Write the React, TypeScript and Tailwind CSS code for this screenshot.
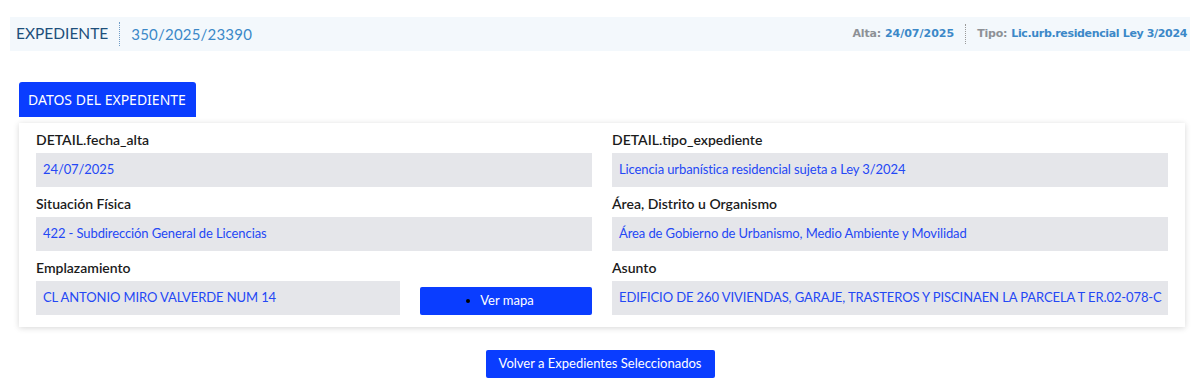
import React from "react";

const lato = {fontFamily: "Lato, 'Open Sans', sans-serif"};

const Field = ({label, value}: {label: string; value: string}) => (
    <div className="flex flex-col">
        <div className="text-[14px] leading-[20px] font-semibold text-[#1b1b1b] mb-[3px]">{label}</div>
        <div className="h-[34px] bg-[#e5e6ea] px-[7px] flex items-center text-[13px] tracking-[-0.1px] text-[#2448f5] whitespace-nowrap overflow-hidden">
            {value}
        </div>
    </div>
);

export default function App() {
    return (
        <div className="w-[1200px] h-[383px] bg-white pt-[17px]" style={lato}>
            <div className="mx-[10px] h-[34px] bg-[#f3f8fc] flex items-center justify-between pl-[6px] pr-[3px]">
                <div className="flex items-center">
                    <span className="text-[15.5px] text-[#1d4f7b]">EXPEDIENTE</span>
                    <span className="mx-[11px] h-[24px] border-l border-dotted border-[#6f9cc6]"/>
                    <span className="text-[15px] text-[#3b88c8] tracking-[0.2px]">350/2025/23390</span>
                </div>
                <div className="flex items-center text-[11px] font-bold" style={{fontFamily: "'DejaVu Sans', Verdana, sans-serif"}}>
                    <span className="text-[#8d9196] tracking-[-0.2px]">Alta:</span>
                    <span className="ml-[4px] text-[#3b88c8]">24/07/2025</span>
                    <span className="mx-[11px] h-[20px] border-l border-dotted border-[#9a9a9a]"/>
                    <span className="text-[#8d9196] tracking-[-0.2px]">Tipo:</span>
                    <span className="ml-[4px] text-[#3b88c8] tracking-[-0.35px]">Lic.urb.residencial Ley 3/2024</span>
                </div>
            </div>

            <div className="mx-[19px] mt-[31px]">
                <div
                    className="w-[177px] h-[35px] bg-[#0a3dff] rounded-t-[3px] flex items-center pl-[9px] text-white text-[14px]"
                    style={{fontFamily: "'Noto Sans', 'Open Sans', sans-serif"}}
                >
                    DATOS DEL EXPEDIENTE
                </div>
                <div className="mt-[6px] w-[1166px] bg-white shadow-[0_1px_6px_rgba(0,0,0,0.16)] px-[17px] pt-[7px] pb-[12px]">
                    <div className="grid grid-cols-2 gap-x-[20px] gap-y-[7px]">
                        <Field label="DETAIL.fecha_alta" value="24/07/2025"/>
                        <Field label="DETAIL.tipo_expediente" value="Licencia urbanística residencial sujeta a Ley 3/2024"/>
                        <Field label="Situación Física" value="422 - Subdirección General de Licencias"/>
                        <Field label="Área, Distrito u Organismo" value="Área de Gobierno de Urbanismo, Medio Ambiente y Movilidad"/>
                        <div className="flex items-end gap-[20px]">
                            <div className="w-[364px]">
                                <Field label="Emplazamiento" value="CL ANTONIO MIRO VALVERDE NUM 14"/>
                            </div>
                            <button className="relative w-[172px] h-[28px] bg-[#0a3dff] rounded-[2px] text-white text-[13px] flex items-center justify-center">
                                <span className="absolute left-[46px] top-[12px] w-[4px] h-[4px] rounded-full bg-black"/>
                                <span className="ml-[2px]">Ver mapa</span>
                            </button>
                        </div>
                        <Field label="Asunto" value="EDIFICIO DE 260 VIVIENDAS, GARAJE, TRASTEROS Y PISCINAEN LA PARCELA T ER.02-078-C"/>
                    </div>
                </div>
            </div>

            <div className="flex justify-center mt-[23px]">
                <button className="w-[229px] h-[28px] bg-[#0a3dff] rounded-[2px] text-white text-[13px]">
                    Volver a Expedientes Seleccionados
                </button>
            </div>
        </div>
    );
}
